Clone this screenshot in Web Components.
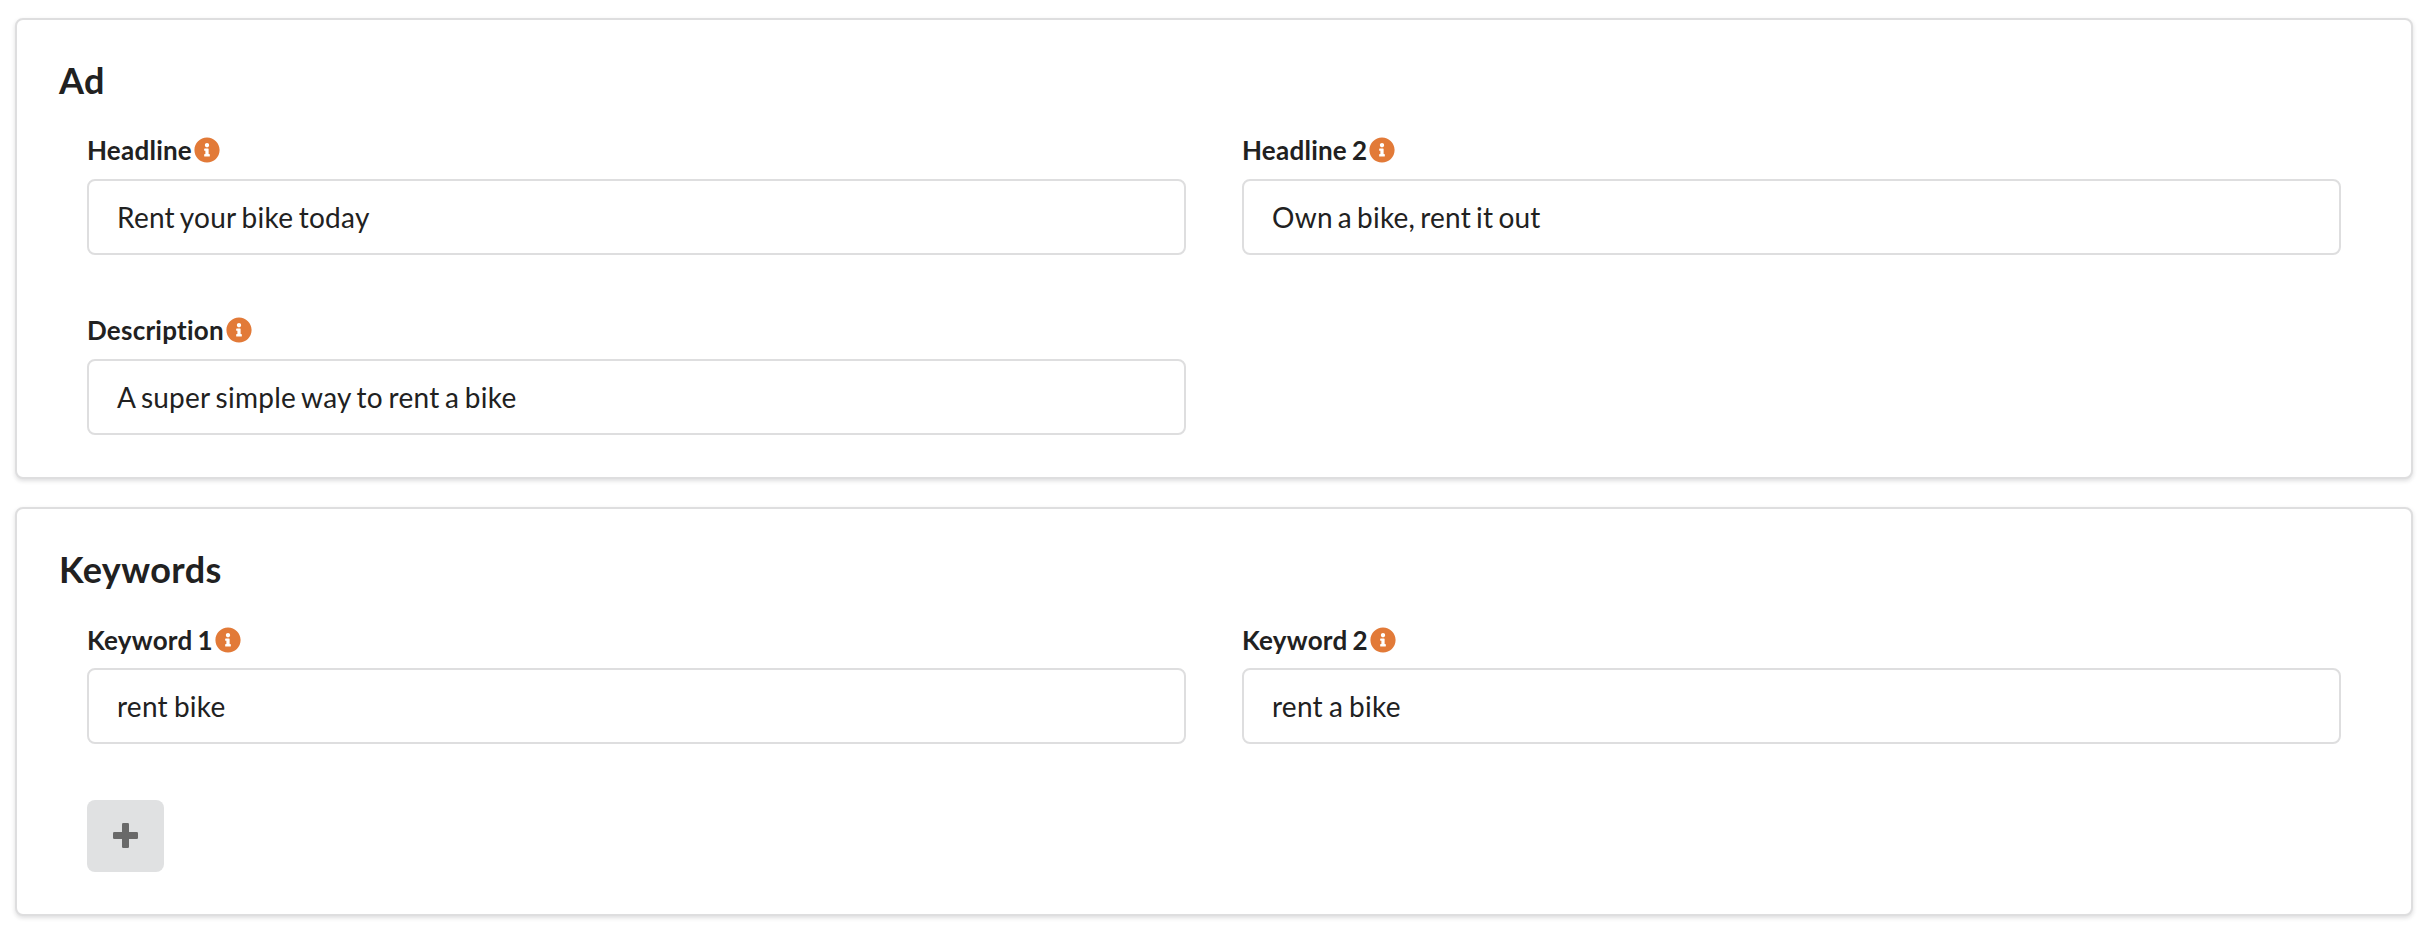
<!DOCTYPE html>
<html lang="en">
<head>
<meta charset="utf-8">
<title>Ad editor</title>
<style>
  body { margin: 0; background: #fff; color: #212121; font-family: Lato, "Liberation Sans", sans-serif; font-variant-ligatures: none; }
</style>
</head>
<body>
<ad-editor></ad-editor>
<script>
  const define = (name, html) => {
    const template = document.createElement('template');
    template.innerHTML = html;
    customElements.define(name, class extends HTMLElement {
      constructor() {
        super();
        this.attachShadow({ mode: 'open' }).append(template.content.cloneNode(true));
      }
    });
  };

  define('info-icon', `
    <style>
      :host { display: block; width: 26px; height: 26px; color: #e27a38; }
      svg { display: block; width: 26px; height: 26px; }
    </style>
    <svg viewBox="0 0 512 512" fill="currentColor" aria-hidden="true"><path d="M256 8C119.043 8 8 119.083 8 256c0 136.997 111.043 248 248 248s248-111.003 248-248C504 119.083 392.957 8 256 8zm0 110c23.196 0 42 18.804 42 42s-18.804 42-42 42-42-18.804-42-42 18.804-42 42-42zm56 254c0 6.627-5.373 12-12 12h-88c-6.627 0-12-5.373-12-12v-24c0-6.627 5.373-12 12-12h12v-64h-12c-6.627 0-12-5.373-12-12v-24c0-6.627 5.373-12 12-12h64c6.627 0 12 5.373 12 12v100h12c6.627 0 12 5.373 12 12v24z"/></svg>`);

  define('form-field', `
    <style>
      :host { display: block; }
      .label { display: flex; height: 26px; font-size: 26px; font-weight: 700; line-height: 26px; letter-spacing: 0.24px; word-spacing: -1.5px; white-space: nowrap; margin-bottom: var(--label-gap, 16px); }
      info-icon { margin-left: 2px; }
      .box { box-sizing: border-box; height: 76px; padding: 0 28px; border: 2px solid #dededf; border-radius: 8px; font-size: 28px; line-height: 72px; letter-spacing: 0.25px; word-spacing: var(--value-word-spacing, -1.8px); white-space: nowrap; }
    </style>
    <div class="label"><slot name="label"></slot><info-icon></info-icon></div>
    <div class="box"><slot></slot></div>`);

  define('add-button', `
    <style>
      :host { display: block; }
      button { display: flex; align-items: center; justify-content: center; width: 77px; height: 72px; margin: 0; padding: 0 0 1px; border: 0; border-radius: 8px; background: #e0e1e2; color: #696969; }
      svg { display: block; width: 25px; height: 25px; }
    </style>
    <button type="button" aria-label="Add keyword"><svg viewBox="0 0 25 25" fill="currentColor"><rect x="9" y="0" width="7" height="25" rx="1.3"/><rect x="0" y="9" width="25" height="7" rx="1.3"/></svg></button>`);

  define('form-segment', `
    <style>
      :host { display: block; box-sizing: border-box; padding: 37px 70px 42px; border: 2px solid #dededf; border-radius: 8px; background: #fff; box-shadow: 0 2px 4px 0 rgba(34,36,38,.15); }
      h3 { margin: 0 0 var(--heading-gap, 34px) -28px; font-size: 36px; font-weight: 700; line-height: 46px; letter-spacing: 0.4px; }
      .grid { display: grid; grid-template-columns: 1fr 1fr; column-gap: 56px; row-gap: var(--row-gap, 62px); }
    </style>
    <h3><slot name="title"></slot></h3>
    <div class="grid"><slot></slot></div>`);

  define('ad-editor', `
    <style>
      :host { display: flex; flex-direction: column; gap: 28px; padding: 18px 21px 18px 15px; }
      .keywords { --heading-gap: 35px; --label-gap: 15px; --row-gap: 56px; --value-word-spacing: -1.4px; }
      .tight { --value-word-spacing: -2.4px; }
    </style>
    <form-segment>
      <span slot="title">Ad</span>
      <form-field><span slot="label">Headline</span>Rent your bike today</form-field>
      <form-field class="tight"><span slot="label">Headline 2</span>Own a bike, rent it out</form-field>
      <form-field><span slot="label">Description</span>A super simple way to rent a bike</form-field>
    </form-segment>
    <form-segment class="keywords">
      <span slot="title">Keywords</span>
      <form-field><span slot="label">Keyword 1</span>rent bike</form-field>
      <form-field><span slot="label">Keyword 2</span>rent a bike</form-field>
      <add-button></add-button>
    </form-segment>`);
</script>
</body>
</html>
